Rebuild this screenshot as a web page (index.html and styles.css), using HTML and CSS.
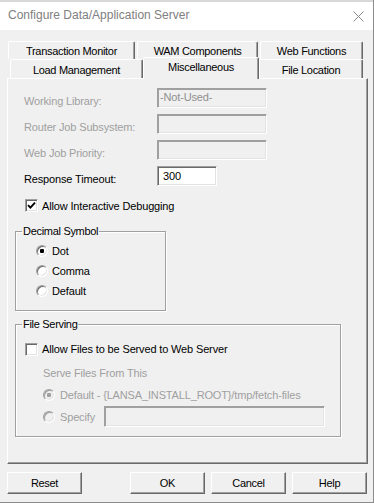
FILE: index.html
```html
<!DOCTYPE html>
<html>
<head>
<meta charset="utf-8">
<link rel="stylesheet" href="styles.css">
</head>
<body>
<div class="window">
  <div class="topstrip"></div>
  <div class="titlebar">
    <span class="title">Configure Data/Application Server</span>
    <svg class="close" width="11" height="11" viewBox="0 0 11 11"><path d="M0.5 0.5L10.5 10.5M10.5 0.5L0.5 10.5" stroke="#8a8a8a" stroke-width="1" fill="none"/></svg>
  </div>
  <div class="client">
    <div class="tabs">
      <div class="tabrow back">
        <div class="tab tab-tm">Transaction Monitor</div>
        <div class="tab tab-wam">WAM Components</div>
        <div class="tab tab-wf">Web Functions</div>
      </div>
      <div class="tabrow front">
        <div class="tab tab-lm">Load Management</div>
        <div class="tab tab-misc selected">Miscellaneous</div>
        <div class="tab tab-fl">File Location</div>
      </div>
    </div>
    <div class="panel">
      <div class="form">
        <span class="lbl disabled">Working Library:</span>
        <div class="field field-wide disabled-field">-Not-Used-</div>
        <span class="lbl disabled">Router Job Subsystem:</span>
        <div class="field field-wide disabled-field"></div>
        <span class="lbl disabled">Web Job Priority:</span>
        <div class="field field-wide disabled-field"></div>
        <span class="lbl">Response Timeout:</span>
        <div class="field field-short">300</div>
      </div>
      <div class="check-row debug-row">
        <span class="checkbox"><svg width="9" height="9" viewBox="0 0 9 9"><path d="M1 4.2L3.4 6.6L8 1.6" stroke="#000" stroke-width="1.9" fill="none"/></svg></span>
        <span>Allow Interactive Debugging</span>
      </div>
      <fieldset class="group decimal">
        <legend>Decimal Symbol</legend>
        <div class="radio-row"><span class="radio checked"></span><span>Dot</span></div>
        <div class="radio-row"><span class="radio"></span><span>Comma</span></div>
        <div class="radio-row"><span class="radio"></span><span>Default</span></div>
      </fieldset>
      <fieldset class="group files">
        <legend>File Serving</legend>
        <div class="check-row files-check">
          <span class="checkbox"></span>
          <span>Allow Files to be Served to Web Server</span>
        </div>
        <div class="serve-label disabled">Serve Files From This</div>
        <div class="radio-row sub-radio default-row"><span class="radio checked dis"></span><span class="disabled">Default - {LANSA_INSTALL_ROOT}/tmp/fetch-files</span></div>
        <div class="radio-row sub-radio specify-row"><span class="radio dis"></span><span class="disabled specify-lbl">Specify</span><div class="field field-specify disabled-field"></div></div>
      </fieldset>
    </div>
    <div class="buttons">
      <div class="btn">Reset</div>
      <div class="spacer"></div>
      <div class="btn">OK</div>
      <div class="btn">Cancel</div>
      <div class="btn">Help</div>
    </div>
  </div>
</div>
</body>
</html>
```
FILE: styles.css
```css
html, body {
  margin: 0;
  padding: 0;
  background: #f0f0f0;
}
body {
  font-family: "Liberation Sans", Arial, sans-serif;
  font-size: 11px;
  letter-spacing: -0.15px;
  color: #000;
}
.window {
  width: 374px;
  height: 503px;
  box-sizing: border-box;
  border-right: 1px solid #8c8c8c;
  border-bottom: 1px solid #8c8c8c;
  display: flex;
  flex-direction: column;
  overflow: hidden;
}
.topstrip {
  height: 2px;
  background: #d8d8d8;
}
.titlebar {
  height: 28px;
  background: #fff;
  display: flex;
  align-items: center;
  justify-content: space-between;
  padding: 0 9px 0 8px;
}
.title {
  font-size: 12px;
  letter-spacing: 0;
  color: #808080;
  margin-top: -2px;
}
.client {
  flex: 1;
  background: #f0f0f0;
  padding: 11px 5px 0 7px;
  display: flex;
  flex-direction: column;
}
.tabs {
  display: flex;
  flex-direction: column;
}
.tabrow {
  display: flex;
  align-items: flex-start;
}
.tabrow.back {
  height: 18px;
  padding-left: 1px;
  gap: 2px;
}
.tabrow.front {
  height: 19px;
  padding-left: 3px;
}
.tab {
  box-sizing: border-box;
  background: #f0f0f0;
  border-top: 1px solid #fff;
  border-left: 1px solid #fff;
  border-right: 1px solid #696969;
  box-shadow: inset -1px 0 0 #a0a0a0;
  border-top-left-radius: 2px;
  border-top-right-radius: 2px;
  display: flex;
  justify-content: center;
  align-items: center;
  letter-spacing: -0.3px;
}
.tabrow.back .tab { height: 18px; padding-top: 1px; }
.tabrow.front .tab { height: 19px; padding-top: 1px; }
.tab-tm { width: 127px; }
.tab-wam { width: 121px; }
.tab-wf { width: 103px; }
.tab-lm { width: 133px; }
.tab-misc { width: 116px; }
.tab-fl { width: 104px; }
.tabrow.front .tab.selected {
  height: 22px;
  margin-top: -2px;
  margin-bottom: -1px;
  padding-top: 0;
  padding-bottom: 4px;
  position: relative;
  z-index: 2;
}
.panel {
  height: 386px;
  box-sizing: border-box;
  border-top: 1px solid #fff;
  border-left: 1px solid #fff;
  border-right: 1px solid #696969;
  border-bottom: 1px solid #696969;
  box-shadow: inset -1px -1px 0 #a0a0a0;
  display: flex;
  flex-direction: column;
  align-items: flex-start;
}
.form {
  display: grid;
  grid-template-columns: 133px auto;
  grid-auto-rows: 20px;
  row-gap: 6px;
  padding: 9px 0 0 16px;
}
.lbl {
  align-self: end;
  line-height: 14px;
  margin-bottom: 0;
  white-space: nowrap;
}
.disabled {
  color: #9f9f9f;
}
.field {
  box-sizing: border-box;
  height: 20px;
  background: #fff;
  border: 1px solid;
  border-color: #a0a0a0 #fff #fff #a0a0a0;
  box-shadow: inset 1px 1px 0 #696969, inset -1px -1px 0 #e3e3e3;
  display: flex;
  align-items: center;
  padding-left: 5px;
  line-height: 14px;
}
.disabled-field {
  background: #f0f0f0;
  color: #8f8f8f;
  padding-left: 2px;
  box-shadow: inset 1px 1px 0 #a0a0a0, inset -1px -1px 0 #e3e3e3;
  padding-bottom: 2px;
}
.field-wide { width: 110px; }
.field-short { width: 60px; }
.field-specify { width: 221px; height: 21px; }
.check-row {
  display: flex;
  align-items: center;
  gap: 4px;
  white-space: nowrap;
}
.debug-row {
  margin: 13px 0 0 17px;
  height: 13px;
}
.checkbox {
  box-sizing: border-box;
  width: 13px;
  height: 13px;
  background: #fff;
  border: 1px solid;
  border-color: #a0a0a0 #fff #fff #a0a0a0;
  box-shadow: inset 1px 1px 0 #696969, inset -1px -1px 0 #e3e3e3;
  display: flex;
  align-items: center;
  justify-content: center;
  flex: none;
}
.checkbox svg { display: block; }
.group {
  box-sizing: border-box;
  margin: 0;
  min-width: 0;
  border: 1px solid #a0a0a0;
  box-shadow: 1px 1px 0 #fff, inset 1px 1px 0 #fff;
  padding: 3px 6px 9px 6px;
}
.group legend {
  padding: 0 1px;
  line-height: 14px;
  letter-spacing: -0.3px;
}
.decimal {
  margin: 12px 0 0 7px;
  width: 151px;
}
.files {
  margin: 6px 0 0 7px;
  width: 326px;
  padding-top: 8px;
}
.radio-row {
  display: flex;
  align-items: center;
  height: 20px;
  gap: 4px;
  padding-left: 14px;
  white-space: nowrap;
}
.radio {
  box-sizing: border-box;
  width: 12px;
  height: 12px;
  border-radius: 50%;
  background: #fff;
  border: 1px solid;
  border-color: #a0a0a0 #fff #fff #a0a0a0;
  box-shadow: inset 1px 1px 0 #696969, inset -1px -1px 0 #e3e3e3;
  display: flex;
  align-items: center;
  justify-content: center;
  flex: none;
}
.radio.checked::after {
  content: "";
  width: 4px;
  height: 4px;
  border-radius: 1px;
  background: #000;
}
.radio.dis {
  background: #f0f0f0;
  box-shadow: inset 1px 1px 0 #a0a0a0, inset -1px -1px 0 #e3e3e3;
}
.radio.dis.checked::after {
  background: #a0a0a0;
}
.files-check {
  height: 20px;
  padding-left: 3px;
}
.serve-label {
  height: 20px;
  line-height: 20px;
  margin-top: 4px;
  padding-left: 21px;
}
.sub-radio {
  padding-left: 21px;
  gap: 5px;
}
.default-row {
  margin-top: 2px;
}
.specify-row {
  margin-top: 1px;
  height: 21px;
}
.specify-lbl {
  width: 39px;
}
.buttons {
  display: flex;
  gap: 6px;
  margin-top: 8px;
  padding-right: 1px;
}
.spacer { flex: 1; }
.btn {
  box-sizing: border-box;
  width: 75px;
  height: 22px;
  background: #f0f0f0;
  border-top: 1px solid #fff;
  border-left: 1px solid #fff;
  border-right: 1px solid #696969;
  border-bottom: 1px solid #696969;
  box-shadow: inset -1px -1px 0 #a0a0a0;
  display: flex;
  align-items: center;
  justify-content: center;
  letter-spacing: -0.3px;
}
```
